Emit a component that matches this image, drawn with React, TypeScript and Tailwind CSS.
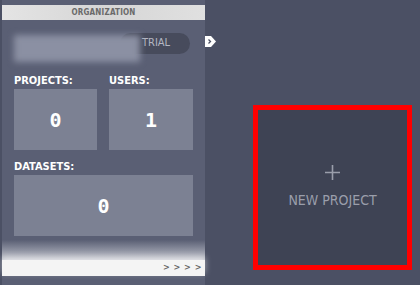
import React from 'react';

const font = { fontFamily: '"DejaVu Sans Condensed", "DejaVu Sans", sans-serif' };

const StatBox: React.FC<{ value: string; className?: string }> = ({ value, className = '' }) => (
  <div className={`h-[61px] bg-[#7c8193] flex items-center justify-center ${className}`}>
    <span className="text-white font-bold text-[20px] leading-none font-['DejaVu_Sans_Mono',monospace]">{value}</span>
  </div>
);

const App: React.FC = () => {
  return (
    <div className="w-[420px] h-[285px] bg-[#4b5064] flex overflow-hidden" style={font}>
      {/* Organization panel */}
      <div className="ml-[2px] w-[203px] h-full bg-[#5a5f74] flex flex-col">
        <div className="mt-[5px] h-[15px] bg-gradient-to-r from-[#e4e4e4] via-[#d6d6d6] to-[#e0e0e0] flex items-center justify-center">
          <span className="text-[8px] tracking-[0.2px] text-[#6a6a6a] font-bold">ORGANIZATION</span>
        </div>

        <div className="relative h-[55px]">
          <div className="absolute left-[118px] top-[13px] w-[70px] h-[21px] rounded-full bg-[#474b5c] flex items-center pl-[22px]">
            <span className="text-[11px] text-[#b4b7c3]">TRIAL</span>
          </div>
          <div className="absolute left-[12px] top-[15px] w-[126px] h-[27px] bg-[#8b90a3] blur-[3px]" />
        </div>

        <div className="px-[12px] flex flex-col">
          <div className="flex gap-[12px] text-white font-bold text-[11px] leading-none h-[10px]">
            <span className="w-[83px]">PROJECTS:</span>
            <span>USERS:</span>
          </div>
          <div className="flex gap-[12px] mt-[4px]">
            <StatBox value="0" className="w-[83px]" />
            <StatBox value="1" className="w-[84px]" />
          </div>
          <div className="mt-[11px] text-white font-bold text-[11px] leading-none h-[10px]">DATASETS:</div>
          <StatBox value="0" className="w-[179px] mt-[4px]" />
        </div>

        <div className="mt-[4px] h-[20px] bg-gradient-to-b from-[#5a5f74] to-[#c4c6ce]" />
        <div className="h-[16px] bg-[#f4f4f4] flex items-center justify-end pr-[3px] shadow-[0_-3px_6px_rgba(255,255,255,0.5)]">
          <span className="text-[9px] text-[#666] tracking-[0.5px] font-bold">{'> > > >'}</span>
        </div>
      </div>

      {/* Right side */}
      <div className="relative flex-1">
        <div className="absolute left-0 top-[36px] w-[11px] h-[11px]">
          <svg width="11" height="11" viewBox="0 0 11 11">
            <path d="M0 0 H6 L11 5.5 L6 11 H0 Z" fill="#ffffff" />
            <path d="M3.5 3.5 L5.5 5.5 L3.5 7.5" stroke="#4b5064" strokeWidth="1.3" fill="none" />
          </svg>
        </div>
        <div className="pl-[48px] pt-[105px]">
          <div className="w-[159px] h-[165px] border-[5px] border-[#ff0000] bg-[#3e4354] flex flex-col items-center justify-center">
            <svg width="15" height="15" viewBox="0 0 15 15" className="mt-[-4px]">
              <path d="M7.5 0 V15 M0 7.5 H15" stroke="#9a9eab" strokeWidth="1.6" />
            </svg>
            <span className="mt-[13px] text-[14px] leading-none text-[#9a9eab]">NEW PROJECT</span>
          </div>
        </div>
      </div>
    </div>
  );
};

export default App;
